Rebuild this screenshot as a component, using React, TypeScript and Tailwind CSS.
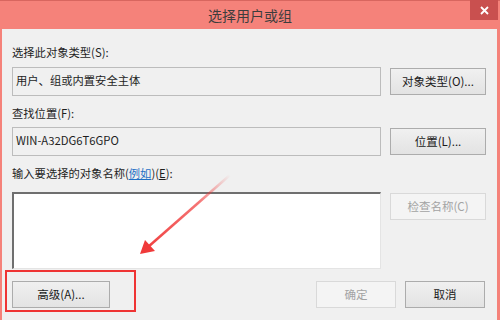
import * as React from "react";

const font = { fontFamily: '"Noto Sans CJK SC", "Noto Sans", sans-serif' };

function WinButton({ label, disabled, className = "" }: { label: string; disabled?: boolean; className?: string }) {
    return (
        <div
            className={`flex items-center justify-center text-[11.5px] leading-none ${
                disabled
                    ? "border border-[#d9d9d9] bg-[#f4f4f4] text-[#a3a3a3]"
                    : "border border-[#acacac] bg-gradient-to-b from-[#f0f0f0] to-[#e3e3e3] text-[#1a1a1a]"
            } ${className}`}
        >
            {label}
        </div>
    );
}

export default function App() {
    return (
        <div className="relative w-[500px] h-[320px] overflow-hidden bg-[#f5827a] flex flex-col" style={font}>
            {/* title bar */}
            <div className="relative h-[29px] shrink-0 border-t border-[#d8665f] flex items-center justify-center">
                <span className="text-[14px] text-[#3d3d3d]">选择用户或组</span>
                <div className="absolute right-[2px] -top-px w-[28px] h-[20px] bg-[#c9504f] flex items-center justify-center">
                    <svg width="9" height="9" viewBox="0 0 9 9">
                        <path d="M1 1L8 8M8 1L1 8" stroke="#fff" strokeWidth="1.8" />
                    </svg>
                </div>
            </div>

            {/* body */}
            <div className="flex-1 ml-[2px] mr-[3px] bg-[#f0f0f0] pl-[10px] text-[#1e1e1e] text-[11.3px]">
                <div className="mt-[15px] leading-[16px]">选择此对象类型(S):</div>
                <div className="mt-[7px] flex items-center gap-[9px]">
                    <div className="w-[369px] h-[29px] border border-[#bcbcbc] bg-[#f0f0f0] px-[3px] pt-[4px] leading-[16px]">
                        用户、组或内置安全主体
                    </div>
                    <WinButton label="对象类型(O)..." className="w-[96px] h-[27px]" />
                </div>

                <div className="mt-[9px] leading-[16px]">查找位置(F):</div>
                <div className="mt-[6px] flex items-center gap-[9px]">
                    <div className="w-[369px] h-[29px] border border-[#bcbcbc] bg-[#f0f0f0] px-[3px] pt-[4px] leading-[16px]">
                        WIN-A32DG6T6GPO
                    </div>
                    <WinButton label="位置(L)..." className="w-[96px] h-[27px]" />
                </div>

                <div className="mt-[9px] leading-[16px]">
                    输入要选择的对象名称(<span className="text-[#1f6fc5] underline">例如</span>)(<span className="underline">E</span>):
                </div>
                <div className="mt-[11px] flex items-start gap-[9px]">
                    <div className="w-[369px] h-[77px] bg-white border-l-2 border-t-2 border-[#6f6f6f] border-r border-b border-r-[#e4e4e4] border-b-[#e4e4e4]" />
                    <WinButton label="检查名称(C)" disabled className="w-[96px] h-[27px] mt-px" />
                </div>

                <div className="mt-[12px] flex items-center">
                    <WinButton label="高级(A)..." className="w-[98px] h-[27px]" />
                    <WinButton label="确定" disabled className="ml-[206px] w-[80px] h-[27px]" />
                    <WinButton label="取消" className="ml-[9px] w-[80px] h-[27px]" />
                </div>
            </div>

            {/* annotation: highlight box */}
            <div className="absolute left-[5px] top-[270px] w-[131px] h-[42px] border-2 border-[#ef3434]" />

            {/* annotation: arrow */}
            <svg className="absolute left-0 top-0" width="500" height="320" viewBox="0 0 500 320">
                <defs>
                    <linearGradient id="fade" x1="230" y1="175" x2="141" y2="253" gradientUnits="userSpaceOnUse">
                        <stop offset="0" stopColor="#f03a3a" stopOpacity="0" />
                        <stop offset="0.35" stopColor="#f03a3a" stopOpacity="0.7" />
                        <stop offset="1" stopColor="#f03a3a" stopOpacity="1" />
                    </linearGradient>
                </defs>
                <line x1="230" y1="175" x2="148" y2="247" stroke="url(#fade)" strokeWidth="2.5" />
                <polygon points="140,254 145,240 155,251" fill="#f03a3a" />
            </svg>
        </div>
    );
}
